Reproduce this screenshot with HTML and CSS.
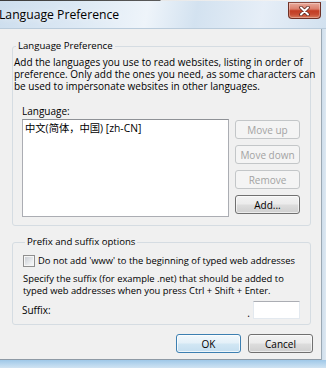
FILE: index.html
```html
<!DOCTYPE html>
<html lang="en">
<head>
    <meta charset="UTF-8">
    <meta name="viewport" content="width=device-width, initial-scale=1.0">
    <title>Language Preference</title>
    <link rel="stylesheet" href="styles.css">
</head>
<body>
    <div class="window">
        <div class="top-edge"></div>
        <div class="titlebar">
            <span class="title">Language Preference</span>
            <button class="close" aria-label="Close">
                <svg width="13" height="10" viewBox="0 0 13 10">
                    <path d="M3 1.5 L10 8.5 M10 1.5 L3 8.5" stroke="#5a2a22" stroke-width="3.6" stroke-linecap="round"/>
                    <path d="M3 1.5 L10 8.5 M10 1.5 L3 8.5" stroke="#ffffff" stroke-width="2" stroke-linecap="round"/>
                </svg>
            </button>
        </div>
        <div class="frame">
            <div class="client">
                <fieldset class="group group-lang">
                    <legend>Language Preference</legend>
                    <p class="desc">Add the languages you use to read websites, listing in order of<br>preference. Only add the ones you need, as some characters can<br>be used to impersonate websites in other languages.</p>
                    <div class="lang-area">
                        <div class="field-label">Language:</div>
                        <div class="lang-row">
                            <div class="listbox">
                                <div class="list-item">中文(简体，中国) [zh-CN]</div>
                            </div>
                            <div class="side-buttons">
                                <button class="btn" disabled>Move up</button>
                                <button class="btn" disabled>Move down</button>
                                <button class="btn" disabled>Remove</button>
                                <button class="btn">Add...</button>
                            </div>
                        </div>
                    </div>
                </fieldset>

                <fieldset class="group group-suffix">
                    <legend>Prefix and suffix options</legend>
                    <label class="check-row">
                        <span class="checkbox"></span>
                        Do not add 'www' to the beginning of typed web addresses
                    </label>
                    <p class="desc suffix-desc">Specify the suffix (for example .net) that should be added to<br>typed web addresses when you press Ctrl + Shift + Enter.</p>
                    <div class="suffix-row">
                        <span>Suffix:</span>
                        <span class="dot">.</span>
                        <span class="textbox"></span>
                    </div>
                </fieldset>

                <div class="dialog-buttons">
                    <button class="btn btn-default">OK</button>
                    <button class="btn">Cancel</button>
                </div>
            </div>
            <div class="frame-right"></div>
        </div>
        <div class="frame-bottom"></div>
    </div>
</body>
</html>
```

FILE: styles.css
```css
body {
    margin: 0;
    font-family: "Open Sans", "Noto Sans CJK SC", sans-serif;
    font-size: 10px;
    line-height: 12px;
    color: #000;
    background-color: #f0f0f0;
}

.window {
    width: 326px;
    height: 368px;
    display: flex;
    flex-direction: column;
    overflow: hidden;
}

.top-edge {
    height: 1px;
    background: linear-gradient(to right, #3b3b3b 0, #5a5a5a 160px, #e8e8e8 161px, #f6f6f6 100%);
}

.titlebar {
    height: 27px;
    display: flex;
    justify-content: space-between;
    background: linear-gradient(100deg, #cddeee 0%, #dde9f4 25%, #eef4fa 45%, #d3e2f0 60%, #e6eef7 80%, #d2e1ef 100%);
    border-bottom: 1px solid #b9cbdb;
}

.title {
    align-self: center;
    font-size: 12.2px;
    margin-left: -1px;
    margin-top: 1px;
    text-shadow: 0 0 6px rgba(255,255,255,0.95);
}

.close {
    width: 33px;
    height: 17px;
    margin: 1px 5px 0 0;
    padding: 0;
    display: flex;
    align-items: center;
    justify-content: center;
    border: 1px solid #6e3025;
    border-top-color: #8a4a3e;
    border-radius: 0 0 4px 4px;
    background: linear-gradient(#e9aa9b 0%, #db7f6c 40%, #c33c22 52%, #c64a30 75%, #d8795b 100%);
    box-shadow: inset 0 0 0 1px rgba(255,255,255,0.3);
}

.frame {
    flex: 1;
    display: flex;
}

.client {
    width: 321px;
    padding-top: 11px;
    background-color: #f0f0f0;
    border-bottom: 1px solid #8e9aa5;
}

.frame-right {
    flex: 1;
    background: linear-gradient(to right, #9aa8b4 0, #9aa8b4 1px, #cfdeeb 1px, #dde8f2 100%);
}

.frame-bottom {
    height: 8px;
    background: linear-gradient(#9fc8e8, #b7d6ee 50%, #d0e3f2);
}

.group {
    margin: 0 10px 0 12px;
    padding: 0 10px 0 1px;
    min-width: 0;
    border: 1px solid #d5dce2;
    border-radius: 3px;
}

.group legend {
    padding: 0 2px;
    margin-left: 2px;
    line-height: 12px;
    font-size: 9.6px;
}

.desc {
    margin: 0;
    padding-top: 4px;
    white-space: nowrap;
}

.lang-area {
    margin-left: 8px;
    padding-bottom: 8px;
}

.field-label {
    margin-top: 13px;
}

.lang-row {
    margin-top: 2px;
    display: flex;
    gap: 6px;
}

.listbox {
    width: 208px;
    height: 98px;
    box-sizing: border-box;
    background-color: #fff;
    border: 1px solid #abadb3;
    border-top-color: #8e9196;
    padding: 2px 2px;
}

.list-item {
    font-size: 10.3px;
}

.side-buttons {
    display: flex;
    flex-direction: column;
    gap: 6px;
    padding-top: 1px;
}

.btn {
    width: 65px;
    height: 19px;
    padding: 0;
    font-family: inherit;
    font-size: 10px;
    color: #000;
    border: 1px solid #707070;
    border-radius: 3px;
    background: linear-gradient(#f3f3f3 0%, #ebebeb 48%, #dddddd 52%, #cfcfcf 100%);
    box-shadow: inset 0 0 0 1px rgba(255,255,255,0.6);
}

.btn:disabled {
    color: #a3a3a3;
    border-color: #c3c6c8;
    background: #f4f4f4;
    box-shadow: none;
}

.group-suffix {
    margin-top: 10px;
    padding-left: 10px;
    padding-bottom: 5px;
    font-size: 9.4px;
}

.group-suffix legend {
    font-size: 9.6px;
}

.check-row {
    margin-top: 7px;
    display: flex;
    align-items: center;
    gap: 3px;
    height: 12px;
    white-space: nowrap;
}

.checkbox {
    flex: none;
    width: 10px;
    height: 10px;
    border: 1px solid #8f8f8f;
    background: linear-gradient(135deg, #c4c8ce, #eef0f2 70%, #f8f8f8);
    box-shadow: inset 0 0 0 1px #f6f6f6;
}

.suffix-desc {
    padding-top: 6px;
}

.suffix-row {
    margin-top: 4px;
    height: 18px;
    display: flex;
    align-items: center;
    margin-left: -1px;
    font-size: 10px;
}

.dot {
    margin-left: auto;
    margin-right: 3px;
    align-self: flex-end;
}

.textbox {
    width: 47px;
    height: 18px;
    box-sizing: border-box;
    background-color: #fff;
    border: 1px solid #e3e9ef;
    border-top-color: #abadb3;
}

.dialog-buttons {
    margin-top: 9px;
    padding-right: 8px;
    display: flex;
    justify-content: flex-end;
    gap: 7px;
}

.btn-default {
    border-color: #3c7fb1;
    background: linear-gradient(#f2f8fc 0%, #e3f0f8 48%, #d2e7f4 52%, #c4def0 100%);
    box-shadow: inset 0 0 0 1px rgba(255,255,255,0.7);
}
```
